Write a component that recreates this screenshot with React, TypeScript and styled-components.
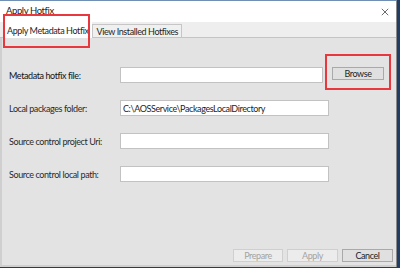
import React from 'react'
import styled, { createGlobalStyle } from 'styled-components'

const GlobalStyle = createGlobalStyle`
  html, body {
    margin: 0;
    padding: 0;
    background: #1f3d66;
    width: 400px;
    height: 268px;
    overflow: hidden;
  }
`

const Window = styled.div`
  position: relative;
  width: 397px;
  height: 267px;
  border-top: 1px solid #6f8fb5;
  border-right: 1px solid #8a8a8a;
  background: #ffffff;
  display: flex;
  flex-direction: column;
  font-family: Lato, 'Noto Sans', sans-serif;
  font-size: 9px;
  letter-spacing: -0.4px;
  color: #1e1e1e;
  box-sizing: border-box;
`

const TitleBar = styled.div`
  height: 21px;
  display: flex;
  align-items: flex-end;
  justify-content: space-between;
  padding: 0 7px 0 6px;
  background: #ffffff;
`

const TitleText = styled.span`
  font-size: 9.5px;
  line-height: 10px;
  color: #222;
  margin-bottom: 6px;
`

const CloseGlyph = styled.svg`
  width: 8px;
  height: 8px;
  margin-bottom: 6px;
`

const TabStrip = styled.div`
  height: 15px;
  background: #eeeeee;
  display: flex;
  align-items: flex-end;
  padding-left: 3px;
  border-bottom: 1px solid #c4c4c4;
`

const Tab = styled.div<{ $active?: boolean }>`
  box-sizing: border-box;
  height: ${(p) => (p.$active ? '17px' : '13px')};
  margin-bottom: ${(p) => (p.$active ? '-1px' : '0')};
  padding: 0 3px;
  display: flex;
  align-items: center;
  background: ${(p) => (p.$active ? '#ffffff' : '#f0f0f0')};
  border: 1px solid ${(p) => (p.$active ? '#ffffff' : '#c6c6c6')};
  border-bottom: none;
  font-size: 9px;
  color: #1e1e1e;
  white-space: nowrap;
`

const Panel = styled.div`
  flex: 1;
  background: #e3e3e3;
  border-left: 2px solid #cfcfcf;
  border-bottom: 2px solid #cfcfcf;
  display: flex;
  flex-direction: column;
  padding: 29px 3px 3px 7px;
`

const Form = styled.div`
  display: flex;
  flex-direction: column;
  gap: 17px;
`

const Row = styled.div`
  display: flex;
  align-items: center;
  height: 16px;
`

const Label = styled.label<{ $strong?: boolean }>`
  width: 111px;
  flex: none;
  white-space: nowrap;
  font-size: 9px;
  color: ${(p) => (p.$strong ? '#111' : '#2a2a2a')};
`

const Field = styled.div<{ $width: number }>`
  box-sizing: border-box;
  width: ${(p) => p.$width}px;
  height: 16px;
  background: #ffffff;
  border: 1px solid #c2c2c2;
  padding: 0 2px;
  display: flex;
  align-items: center;
  font-size: 9px;
  color: #1e1e1e;
  white-space: nowrap;
  overflow: hidden;
`

const Button = styled.div<{ $disabled?: boolean; $width: number }>`
  box-sizing: border-box;
  width: ${(p) => p.$width}px;
  height: 13px;
  display: flex;
  align-items: center;
  justify-content: center;
  font-size: 9px;
  background: ${(p) => (p.$disabled ? '#ececec' : '#e0e0e0')};
  border: 1px solid ${(p) => (p.$disabled ? '#cfcfcf' : '#a9a9a9')};
  color: ${(p) => (p.$disabled ? '#a3a3a3' : '#1e1e1e')};
`

const BrowseSlot = styled.div`
  margin-left: 9px;
  margin-top: -3px;
`

const Footer = styled.div`
  margin-top: auto;
  display: flex;
  justify-content: flex-end;
  gap: 4px;
`

const Highlight = styled.div<{ $x: number; $y: number; $w: number; $h: number }>`
  position: absolute;
  left: ${(p) => p.$x}px;
  top: ${(p) => p.$y}px;
  width: ${(p) => p.$w}px;
  height: ${(p) => p.$h}px;
  box-sizing: border-box;
  border: 2px solid #e8383d;
  pointer-events: none;
`

const App = () => {
  return (
    <>
      <GlobalStyle />
      <Window>
        <TitleBar>
          <TitleText>Apply Hotfix</TitleText>
          <CloseGlyph viewBox="0 0 10 10">
            <path d="M1 1 L9 9 M9 1 L1 9" stroke="#555" strokeWidth="1.1" />
          </CloseGlyph>
        </TitleBar>
        <TabStrip>
          <Tab $active>Apply Metadata Hotfix</Tab>
          <Tab>View Installed Hotfixes</Tab>
        </TabStrip>
        <Panel>
          <Form>
            <Row>
              <Label $strong>Metadata hotfix file:</Label>
              <Field $width={203} />
              <BrowseSlot>
                <Button $width={52}>Browse</Button>
              </BrowseSlot>
            </Row>
            <Row>
              <Label>Local packages folder:</Label>
              <Field $width={209}>C:\AOSService\PackagesLocalDirectory</Field>
            </Row>
            <Row>
              <Label>Source control project Uri:</Label>
              <Field $width={209} />
            </Row>
            <Row>
              <Label>Source control local path:</Label>
              <Field $width={209} />
            </Row>
          </Form>
          <Footer>
            <Button $disabled $width={50}>Prepare</Button>
            <Button $disabled $width={51}>Apply</Button>
            <Button $width={51}>Cancel</Button>
          </Footer>
        </Panel>
        <Highlight $x={3} $y={13} $w={87} $h={34} />
        <Highlight $x={325} $y={53} $w={66} $h={36} />
      </Window>
    </>
  )
}

export default App
